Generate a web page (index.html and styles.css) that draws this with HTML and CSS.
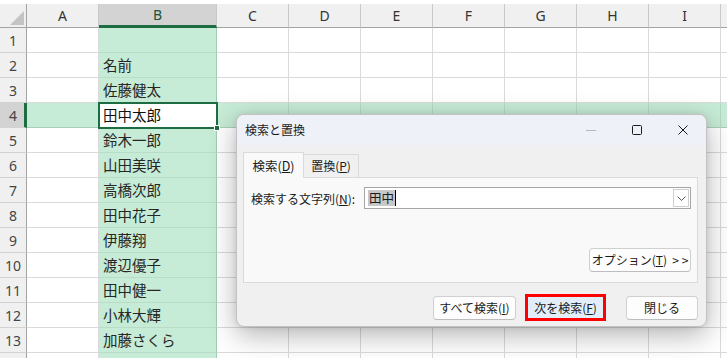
FILE: index.html
```html
<!DOCTYPE html>
<html lang="ja">
<head>
  <meta charset="UTF-8">
  <title>検索と置換</title>
  <link rel="stylesheet" href="styles.css">
</head>
<body>
  <div class="sheet">
    <div class="hd corner">
      <svg width="16" height="14" viewBox="0 0 16 14"><polygon points="16,0 16,14 2,14" fill="#c4c4c4"/></svg>
    </div>
    <div class="hd">A</div><div class="hd hd-sel">B</div><div class="hd">C</div><div class="hd">D</div><div class="hd">E</div><div class="hd">F</div><div class="hd">G</div><div class="hd">H</div><div class="hd">I</div><div class="hd"></div>

    <div class="rh">1</div><div class="c"></div><div class="c b"></div><div class="c"></div><div class="c"></div><div class="c"></div><div class="c"></div><div class="c"></div><div class="c"></div><div class="c"></div><div class="c"></div>
    <div class="rh">2</div><div class="c"></div><div class="c b">名前</div><div class="c"></div><div class="c"></div><div class="c"></div><div class="c"></div><div class="c"></div><div class="c"></div><div class="c"></div><div class="c"></div>
    <div class="rh">3</div><div class="c"></div><div class="c b">佐藤健太</div><div class="c"></div><div class="c"></div><div class="c"></div><div class="c"></div><div class="c"></div><div class="c"></div><div class="c"></div><div class="c"></div>
    <div class="rh rh-sel">4</div><div class="c r4"></div><div class="c b active">田中太郎<span class="handle"></span></div><div class="c r4"></div><div class="c r4"></div><div class="c r4"></div><div class="c r4"></div><div class="c r4"></div><div class="c r4"></div><div class="c r4"></div><div class="c r4"></div>
    <div class="rh">5</div><div class="c"></div><div class="c b">鈴木一郎</div><div class="c"></div><div class="c"></div><div class="c"></div><div class="c"></div><div class="c"></div><div class="c"></div><div class="c"></div><div class="c"></div>
    <div class="rh">6</div><div class="c"></div><div class="c b">山田美咲</div><div class="c"></div><div class="c"></div><div class="c"></div><div class="c"></div><div class="c"></div><div class="c"></div><div class="c"></div><div class="c"></div>
    <div class="rh">7</div><div class="c"></div><div class="c b">高橋次郎</div><div class="c"></div><div class="c"></div><div class="c"></div><div class="c"></div><div class="c"></div><div class="c"></div><div class="c"></div><div class="c"></div>
    <div class="rh">8</div><div class="c"></div><div class="c b">田中花子</div><div class="c"></div><div class="c"></div><div class="c"></div><div class="c"></div><div class="c"></div><div class="c"></div><div class="c"></div><div class="c"></div>
    <div class="rh">9</div><div class="c"></div><div class="c b">伊藤翔</div><div class="c"></div><div class="c"></div><div class="c"></div><div class="c"></div><div class="c"></div><div class="c"></div><div class="c"></div><div class="c"></div>
    <div class="rh">10</div><div class="c"></div><div class="c b">渡辺優子</div><div class="c"></div><div class="c"></div><div class="c"></div><div class="c"></div><div class="c"></div><div class="c"></div><div class="c"></div><div class="c"></div>
    <div class="rh">11</div><div class="c"></div><div class="c b">田中健一</div><div class="c"></div><div class="c"></div><div class="c"></div><div class="c"></div><div class="c"></div><div class="c"></div><div class="c"></div><div class="c"></div>
    <div class="rh">12</div><div class="c"></div><div class="c b">小林大輝</div><div class="c"></div><div class="c"></div><div class="c"></div><div class="c"></div><div class="c"></div><div class="c"></div><div class="c"></div><div class="c"></div>
    <div class="rh">13</div><div class="c"></div><div class="c b">加藤さくら</div><div class="c"></div><div class="c"></div><div class="c"></div><div class="c"></div><div class="c"></div><div class="c"></div><div class="c"></div><div class="c"></div>
    <div class="rh"></div><div class="c"></div><div class="c b"></div><div class="c"></div><div class="c"></div><div class="c"></div><div class="c"></div><div class="c"></div><div class="c"></div><div class="c"></div><div class="c"></div>
  </div>

  <div class="dialog">
    <div class="titlebar">
      <span class="title">検索と置換</span>
      <div class="caption-btns">
        <span class="cap"><svg width="10" height="10" viewBox="0 0 10 10"><line x1="0" y1="5.5" x2="10" y2="5.5" stroke="#b8b8b8" stroke-width="1"/></svg></span>
        <span class="cap"><svg width="10" height="10" viewBox="0 0 10 10"><rect x="0.5" y="0.5" width="9" height="9" rx="1" fill="none" stroke="#1a1a1a" stroke-width="1"/></svg></span>
        <span class="cap"><svg width="10" height="10" viewBox="0 0 10 10"><path d="M0.5 0.5 L9.5 9.5 M9.5 0.5 L0.5 9.5" stroke="#1a1a1a" stroke-width="1"/></svg></span>
      </div>
    </div>

    <div class="dialog-body">
      <div class="tabs">
        <div class="tab tab-active">検索(<u>D</u>)</div>
        <div class="tab">置換(<u>P</u>)</div>
      </div>
      <div class="panel">
        <div class="field">
          <label>検索する文字列(<u>N</u>):</label>
          <div class="combo">
            <span class="combo-text"><span class="picked">田中</span><span class="caret"></span></span>
            <span class="combo-drop"><svg width="9" height="5" viewBox="0 0 9 5"><path d="M0.5 0.5 L4.5 4.5 L8.5 0.5" fill="none" stroke="#555" stroke-width="1"/></svg></span>
          </div>
        </div>
        <div class="panel-foot">
          <button class="btn btn-options">オプション(<u>T</u>)&nbsp; &gt; &gt;</button>
        </div>
      </div>
      <div class="actions">
        <button class="btn btn-all">すべて検索(<u>I</u>)</button>
        <span class="mark"><button class="btn btn-next">次を検索(<u>F</u>)</button></span>
        <button class="btn btn-close">閉じる</button>
      </div>
    </div>
  </div>
</body>
</html>
```

FILE: styles.css
```css
* {
  box-sizing: border-box;
}

body {
  margin: 0;
  width: 727px;
  height: 358px;
  overflow: hidden;
  background: #fff;
  font-family: "Noto Sans", "Noto Sans CJK JP", sans-serif;
  position: relative;
}

/* spreadsheet */
.sheet {
  display: grid;
  grid-template-columns: 27px 72px 118px repeat(8, 72px);
  grid-template-rows: 24px repeat(14, 25px);
  padding-top: 4px;
}

.hd {
  background: #f0f0f0;
  border-right: 1px solid #c9c9c9;
  border-bottom: 1px solid #a3a3a3;
  display: flex;
  align-items: center;
  justify-content: center;
  font-size: 14px;
  color: #333;
  padding-bottom: 1px;
}

.corner {
  align-items: flex-end;
  justify-content: flex-end;
  padding: 0 2px 2px 0;
  border-right-color: #a3a3a3;
}

.hd-sel {
  background: #d3d3d3;
  color: #16553a;
  border-bottom: 3px solid #1e6c41;
  padding-bottom: 0;
}

.rh {
  background: #f0f0f0;
  border-right: 1px solid #a3a3a3;
  border-bottom: 1px solid #d2d2d2;
  display: flex;
  align-items: center;
  justify-content: center;
  font-size: 14px;
  color: #444;
}

.rh-sel {
  background: #d3d3d3;
  border-right: 3px solid #1e6c41;
  padding-left: 2px;
}

.c {
  border-right: 1px solid #dadada;
  border-bottom: 1px solid #dadada;
  font-family: "Noto Sans CJK JP", sans-serif;
  font-size: 14.5px;
  line-height: 24px;
  padding-left: 4px;
  color: #262626;
  white-space: nowrap;
}

.b {
  background: #c6ebd6;
  border-right-color: #a2cdb4;
  border-bottom-color: #b9dcc7;
}

.r4 {
  background: #c6ebd6;
  border-right-color: #b4d9c3;
  border-bottom-color: #a9cfb8;
}

.active {
  background: #fff;
  color: #111;
  position: relative;
  z-index: 1;
  outline: 2px solid #1e6c41;
  outline-offset: -1px;
}

.handle {
  position: absolute;
  right: -4px;
  bottom: -4px;
  width: 6px;
  height: 6px;
  background: #1e6c41;
  border: 1px solid #fff;
}

/* find and replace dialog */
.dialog {
  position: absolute;
  left: 236px;
  top: 114px;
  width: 471px;
  height: 213px;
  border: 1px solid #c2c2c2;
  border-radius: 8px;
  background: #f0f0f0;
  box-shadow: 0 8px 28px rgba(0, 0, 0, 0.3), 0 0 6px rgba(0, 0, 0, 0.08);
  overflow: hidden;
  display: flex;
  flex-direction: column;
  font-family: "Noto Sans CJK JP", sans-serif;
  font-size: 12px;
  color: #1a1a1a;
  z-index: 5;
}

.titlebar {
  height: 30px;
  flex-shrink: 0;
  background: #eff1f8;
  display: flex;
  align-items: center;
  padding-left: 8px;
}

.title {
  flex-grow: 1;
  line-height: 1;
}

.caption-btns {
  display: flex;
  height: 100%;
}

.cap {
  width: 46px;
  height: 100%;
  display: flex;
  align-items: center;
  justify-content: center;
}

.cap svg {
  display: block;
}

.dialog-body {
  padding: 7px 8px 0 6px;
  display: flex;
  flex-direction: column;
}

.tabs {
  display: flex;
  align-items: flex-end;
  height: 25px;
}

.tab {
  width: 55px;
  height: 23px;
  border: 1px solid #dadada;
  border-bottom: none;
  border-left: none;
  background: #f0f0f0;
  display: flex;
  align-items: center;
  justify-content: center;
  line-height: 1;
}

.tab-active {
  width: 61px;
  height: 26px;
  border-left: 1px solid #dadada;
  background: #f9f9f9;
  margin-bottom: -1px;
  position: relative;
  z-index: 1;
  font-size: 12.5px;
  padding-top: 2px;
}

.panel {
  height: 106px;
  background: #f9f9f9;
  border: 1px solid #dadada;
  padding: 9px 6px 10px 7px;
  display: flex;
  flex-direction: column;
  justify-content: space-between;
}

.field {
  display: flex;
  align-items: center;
  justify-content: space-between;
}

.field label {
  line-height: 1;
  padding-top: 1px;
}

.combo {
  width: 327px;
  height: 22px;
  border: 1px solid #a5a5a5;
  background: #fff;
  display: flex;
  align-items: stretch;
}

.combo-text {
  flex-grow: 1;
  display: flex;
  align-items: center;
  padding-left: 3px;
}

.picked {
  background: #c8c8c8;
  line-height: 16px;
  font-size: 12.5px;
  padding: 0 1px;
}

.caret {
  width: 1px;
  height: 16px;
  background: #000;
}

.combo-drop {
  width: 16px;
  margin: 1px;
  border: 1px solid #cfcfcf;
  display: flex;
  align-items: center;
  justify-content: center;
}

.panel-foot {
  display: flex;
  justify-content: flex-end;
}

.btn {
  height: 24px;
  border: 1px solid #d0d0d0;
  border-bottom-color: #bdbdbd;
  border-radius: 4px;
  background: #fdfdfd;
  font-family: "Noto Sans CJK JP", sans-serif;
  font-size: 12px;
  color: #1a1a1a;
  padding: 0;
  line-height: 1;
}

.btn-options {
  width: 102px;
}

.actions {
  display: flex;
  align-items: center;
  justify-content: flex-end;
  padding-top: 11px;
}

.btn-all {
  width: 83px;
}

/* red annotation frame around the default button */
.mark {
  display: flex;
  border: 3px solid #ff0000;
  margin-left: 9px;
}

.btn-next {
  width: 75px;
  height: 21px;
  border: none;
  border-radius: 0;
  background: #e1edf9;
}

.btn-close {
  width: 72px;
  margin-left: 20px;
}
```
